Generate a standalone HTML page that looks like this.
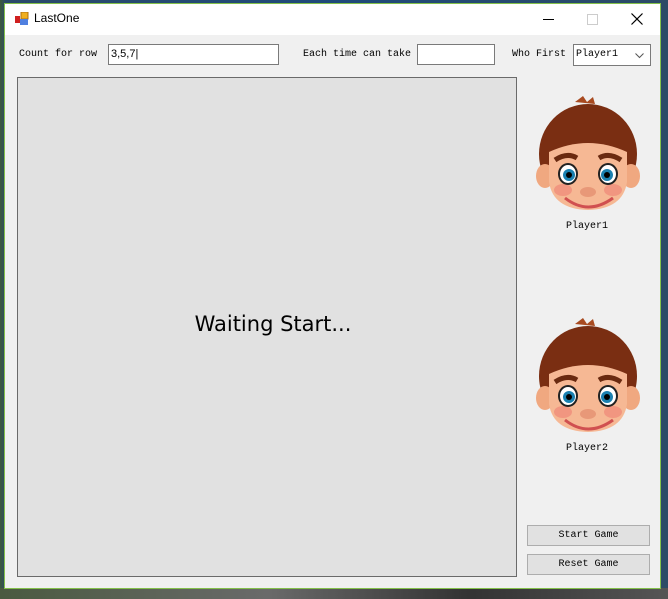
<!DOCTYPE html>
<html><head><style>
*{margin:0;padding:0;box-sizing:border-box}
body{width:668px;height:599px;overflow:hidden;background:linear-gradient(90deg,#3d5a3a 0,#2b4a6a 6px,#1f4a7a 50%,#2c4b66 100%);position:relative;font-family:"Liberation Mono","Noto Sans CJK SC",monospace}
.bot{position:absolute;left:0;top:588px;width:668px;height:11px;background:linear-gradient(90deg,#4a5a40,#6a6a6a 40%,#333 70%,#555)}
.win{position:absolute;left:4px;top:3px;width:657px;height:586px;border:1px solid #83c04a;background:#f0f0f0}
.title{position:absolute;left:0;top:0;width:655px;height:31px;background:#fff}
.t{position:absolute;font-size:10px;color:#000;white-space:nowrap}
.in{position:absolute;background:#fff;border:1px solid #7a7a7a;height:21px}
.btn{position:absolute;left:522px;width:123px;height:21px;background:#e1e1e1;border:1px solid #adadad;font-size:10px;text-align:center;line-height:19px}
</style></head><body>
<div class="bot"></div>
<div class="win">
<div class="title">
<svg style="position:absolute;left:10px;top:8px" width="14" height="14"><rect x="6" y="0" width="7" height="7" fill="#f0b020" stroke="#b07010"/><rect x="0" y="4" width="5" height="7" fill="#d02020"/><rect x="5" y="7" width="8" height="6" fill="#5080e0"/></svg>
<div style="position:absolute;left:29px;top:7px;font-family:'Liberation Sans',sans-serif;font-size:12px">LastOne</div>
<div style="position:absolute;left:538px;top:15px;width:11px;height:1px;background:#000"></div>
<div style="position:absolute;left:582px;top:10px;width:11px;height:11px;border:1px solid #ccc"></div>
<svg style="position:absolute;left:626px;top:9px" width="12" height="12"><path d="M0.5 0.5L11.5 11.5M11.5 0.5L0.5 11.5" stroke="#000" stroke-width="1.2"/></svg>
</div>
<div class="t" style="left:14px;top:45px">Count for row</div>
<div class="in" style="left:103px;top:40px;width:171px"><span style="position:absolute;left:2px;top:3px;font-size:11px;font-family:'Liberation Sans',sans-serif">3,5,7|</span></div>
<div class="t" style="left:298px;top:45px">Each time can take</div>
<div class="in" style="left:412px;top:40px;width:78px"></div>
<div class="t" style="left:507px;top:45px">Who First</div>
<div class="in" style="left:568px;top:40px;width:78px;height:22px"><span style="position:absolute;left:2px;top:4px;font-size:10px">Player1</span><svg style="position:absolute;left:61px;top:8px" width="9" height="6"><path d="M0.5 0.5L4.5 4.5L8.5 0.5" stroke="#555" fill="none"/></svg></div>
<div style="position:absolute;left:12px;top:73px;width:500px;height:500px;background:#e1e1e1;border:1px solid #6a6a6a"></div>
<div style="position:absolute;left:18px;top:308px;width:500px;text-align:center;font-family:'DejaVu Sans',sans-serif;font-size:21px">Waiting Start...</div>
<svg style="position:absolute;left:530px;top:88px" width="106" height="120" viewBox="0 0 106 116" id="f">
<g id="face"><ellipse cx="53" cy="60" rx="49" ry="50" fill="#7a2e12"/><path d="M40 8 L48 2 L52 8 L58 3 L60 10" fill="#a84a20"/><ellipse cx="10" cy="82" rx="9" ry="12" fill="#f0a880"/><ellipse cx="96" cy="82" rx="9" ry="12" fill="#f0a880"/><path d="M14 58 Q53 40 92 58 L92 88 Q88 115 53 116 Q18 115 14 88Z" fill="#f6b894"/><ellipse cx="28" cy="96" rx="9" ry="6" fill="#f08878" opacity=".7"/><ellipse cx="78" cy="96" rx="9" ry="6" fill="#f08878" opacity=".7"/><path d="M20 66 Q32 58 42 64" stroke="#6a2a10" stroke-width="5" fill="none"/><path d="M64 64 Q74 58 86 66" stroke="#6a2a10" stroke-width="5" fill="none"/><ellipse cx="33" cy="80" rx="9" ry="10" fill="#fff" stroke="#222" stroke-width="2"/><ellipse cx="73" cy="80" rx="9" ry="10" fill="#fff" stroke="#222" stroke-width="2"/><circle cx="34" cy="81" r="6" fill="#1a80b0"/><circle cx="72" cy="81" r="6" fill="#1a80b0"/><circle cx="34" cy="81" r="3" fill="#000"/><circle cx="72" cy="81" r="3" fill="#000"/><ellipse cx="53" cy="98" rx="8" ry="5" fill="#e89878"/><path d="M30 104 Q53 122 78 104" stroke="#d05050" stroke-width="3" fill="none"/></g></svg>
<div class="t" style="left:561px;top:217px">Player1</div>
<svg style="position:absolute;left:530px;top:310px" width="106" height="120" viewBox="0 0 106 116"><use href="#face"/></svg>
<div class="t" style="left:561px;top:439px">Player2</div>
<div class="btn" style="top:521px">Start Game</div>
<div class="btn" style="top:550px">Reset Game</div>
</div>
</body></html>
